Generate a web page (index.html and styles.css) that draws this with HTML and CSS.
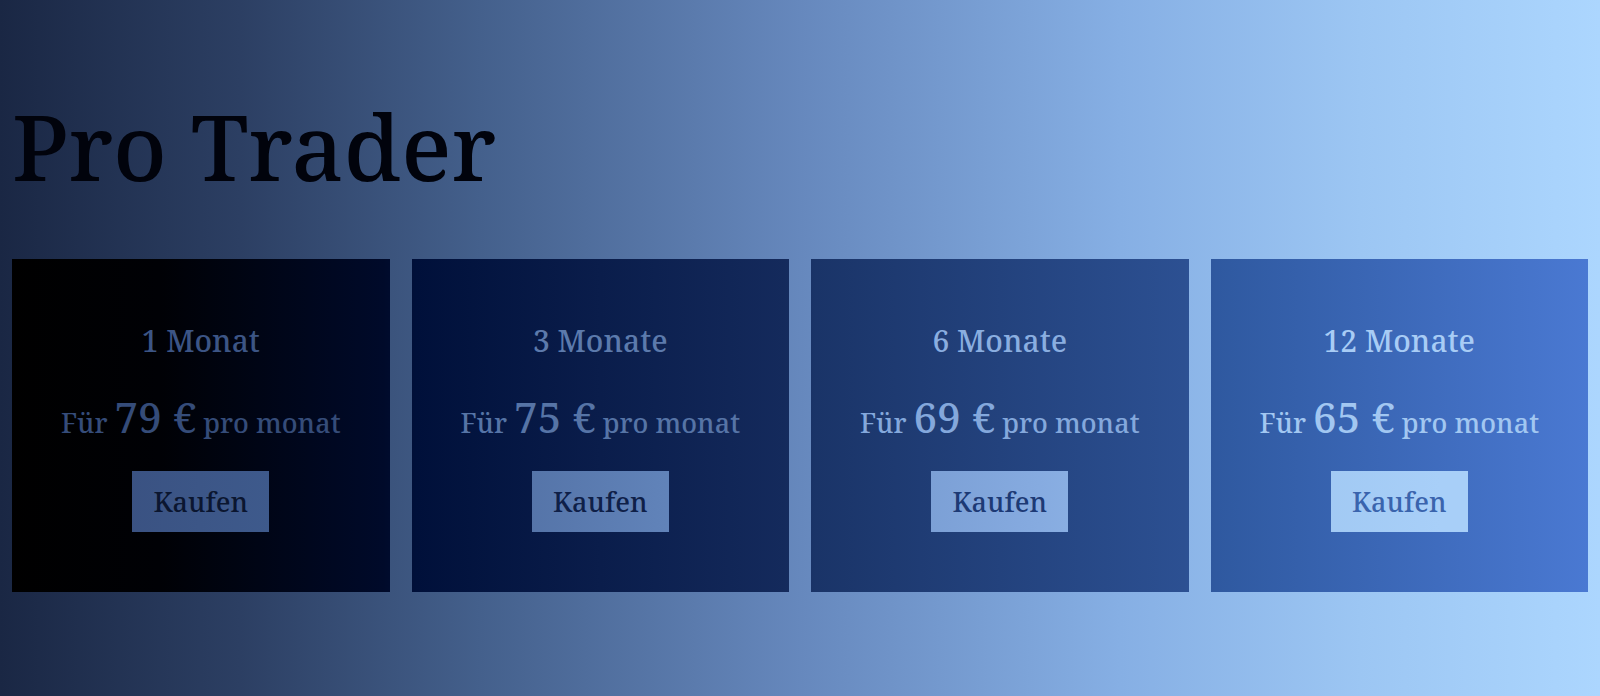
FILE: index.html
```html
<!DOCTYPE html>
<html lang="de">
<head>
<meta charset="utf-8">
<title>Pro Trader</title>
<link rel="stylesheet" href="styles.css">
</head>
<body>
<main class="page">
  <h1 class="page-title">Pro Trader</h1>
  <section class="plans">
    <article class="plan plan--1">
      <h2 class="plan-name">1 Monat</h2>
      <p class="plan-price">Für <span class="plan-amount">79 €</span> pro monat</p>
      <button class="plan-buy" type="button">Kaufen</button>
    </article>
    <article class="plan plan--3">
      <h2 class="plan-name">3 Monate</h2>
      <p class="plan-price">Für <span class="plan-amount">75 €</span> pro monat</p>
      <button class="plan-buy" type="button">Kaufen</button>
    </article>
    <article class="plan plan--6">
      <h2 class="plan-name">6 Monate</h2>
      <p class="plan-price">Für <span class="plan-amount">69 €</span> pro monat</p>
      <button class="plan-buy" type="button">Kaufen</button>
    </article>
    <article class="plan plan--12">
      <h2 class="plan-name">12 Monate</h2>
      <p class="plan-price">Für <span class="plan-amount">65 €</span> pro monat</p>
      <button class="plan-buy" type="button">Kaufen</button>
    </article>
  </section>
</main>
</body>
</html>
```

FILE: styles.css
```css
html, body {
  margin: 0;
  padding: 0;
  height: 100%;
}

body {
  font-family: "Noto Serif", "DejaVu Serif", "Liberation Serif", serif;
  font-weight: 500;
  background: linear-gradient(to right,
    #1a2744 0%,
    #2c3f63 15%,
    #44608c 30%,
    #6688bd 50%,
    #86afe4 70%,
    #9cc6f3 85%,
    #acd6fe 100%);
  overflow: hidden;
}

.page {
  padding: 83px 12px 0;
}

.page-title {
  margin: 0 0 51px;
  font-size: 92px;
  font-weight: 500;
  line-height: normal;
  color: #01030c;
}

.plans {
  display: grid;
  grid-template-columns: repeat(4, 1fr);
  gap: 22px;
}

.plan {
  display: flex;
  flex-direction: column;
  align-items: center;
  padding: 61px 0 60px;
  background: linear-gradient(to right,
    #000000 0%,
    #000105 10%,
    #000a2a 24%,
    #00103a 26%,
    #142a5c 49%,
    #1a3468 51%,
    #2c5092 74%,
    #2f59a0 76%,
    #4b7ad4 100%) fixed;
}

.plan-name {
  margin: 0 0 27px;
  font-size: 30px;
  font-weight: 500;
  line-height: normal;
}

.plan-price {
  margin: 0 0 26px;
  font-size: 27px;
  line-height: normal;
}

.plan-amount {
  font-size: 42px;
}

.plan-buy {
  font-family: inherit;
  font-weight: 500;
  font-size: 27px;
  line-height: normal;
  padding: 12px 21px;
  border: 0;
  border-radius: 0;
  background: linear-gradient(to right,
    #3a5282 8%,
    #3e5a8c 17%,
    #5574a8 33%,
    #6082b8 41%,
    #7a9ed4 57%,
    #86abe0 65%,
    #a0c8f2 81%,
    #a8cff8 90%) fixed;
  cursor: pointer;
}

.plan--1 { color: #354c79; }
.plan--1 .plan-name { color: #3c5585; }
.plan--1 .plan-buy { color: #0b1630; }

.plan--3 { color: #5674a6; }
.plan--3 .plan-name { color: #5c7aac; }
.plan--3 .plan-buy { color: #0f2048; }

.plan--6 { color: #84a8dc; }
.plan--6 .plan-name { color: #8aaee0; }
.plan--6 .plan-buy { color: #1d3a75; }

.plan--12 { color: #a2c7f1; }
.plan--12 .plan-name { color: #a8ccf5; }
.plan--12 .plan-buy { color: #3a64ad; }
```
